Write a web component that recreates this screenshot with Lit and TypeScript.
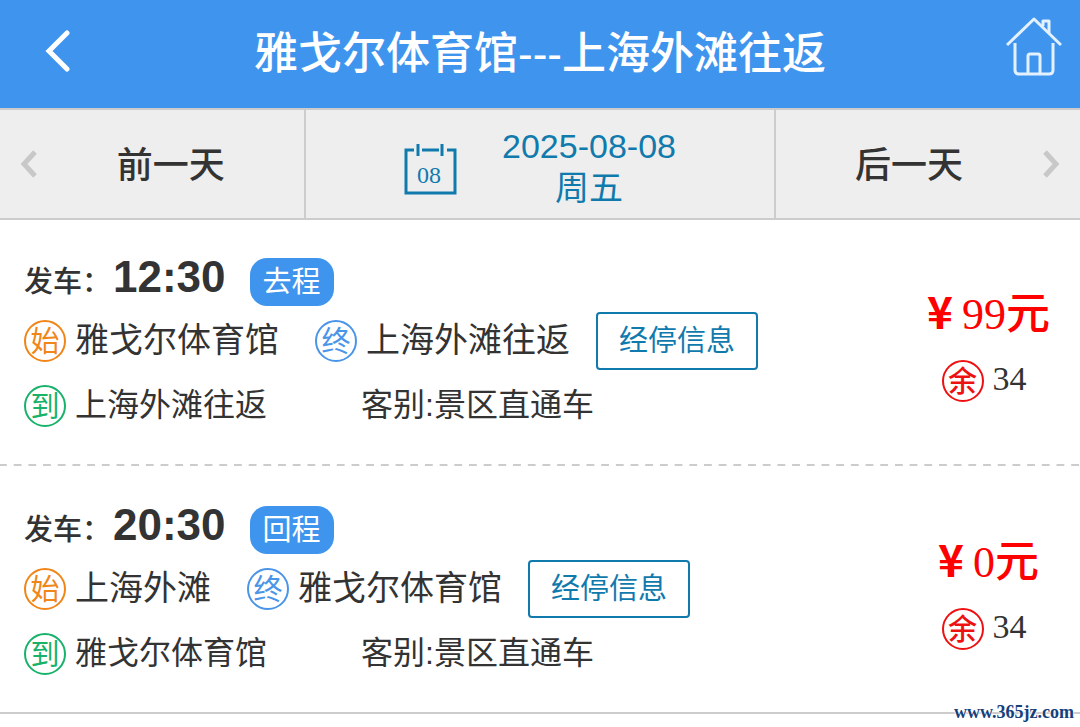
import { LitElement, html, css, svg } from "lit";
import { customElement, property } from "lit/decorators.js";

interface Trip {
  time: string;
  kind: string;
  from: string;
  to: string;
  arrive: string;
  service: string;
  price: number;
  left: number;
}

const trips: Trip[] = [
  { time: "12:30", kind: "去程", from: "雅戈尔体育馆", to: "上海外滩往返", arrive: "上海外滩往返", service: "景区直通车", price: 99, left: 34 },
  { time: "20:30", kind: "回程", from: "上海外滩", to: "雅戈尔体育馆", arrive: "雅戈尔体育馆", service: "景区直通车", price: 0, left: 34 },
];

const chevron = (points: string) => svg`<polyline points=${points} fill="none" stroke="currentColor"></polyline>`;

@customElement("trip-card")
export class TripCard extends LitElement {
  static styles = css`
    :host {
      display: flex;
      justify-content: space-between;
      color: #333;
    }
    .info {
      display: flex;
      flex-direction: column;
      align-items: flex-start;
      padding: 37px 0 37px 24px;
    }
    .row {
      display: flex;
      align-items: center;
    }
    .depart {
      height: 49px;
      margin-bottom: 6px;
      align-items: baseline;
      line-height: 48px;
    }
    .label {
      font-size: 29px;
      font-weight: 500;
    }
    .time {
      font-size: 44px;
      line-height: 40px;
      font-weight: 700;
      margin: 0 24px 0 2px;
    }
    .kind {
      padding: 0 13px;
      border-radius: 17px;
      background: #3f95ee;
      color: #fff;
      font-size: 29px;
      line-height: 48px;
    }
    .route {
      margin-bottom: 15px;
      font-size: 34px;
      line-height: 54px;
    }
    .mark {
      box-sizing: border-box;
      width: 42px;
      height: 42px;
      border: 2px solid currentColor;
      border-radius: 50%;
      font-size: 29px;
      line-height: 40px;
      text-align: center;
    }
    .start { color: #f08519; }
    .end { color: #4a95e8; }
    .reach { color: #18b26b; }
    .remain { color: #ee1111; font-weight: 500; }
    .place {
      margin: 0 36px 2px 9px;
    }
    .last {
      margin-right: 26px;
    }
    .stops {
      font: inherit;
      font-size: 29px;
      line-height: 54px;
      padding: 0 21px;
      border: 2px solid #117aad;
      border-radius: 4px;
      background: #fff;
      color: #117aad;
      white-space: nowrap;
    }
    .arrival {
      font-size: 32px;
      line-height: 38px;
    }
    .station {
      width: 286px;
      margin-left: 9px;
      padding-bottom: 3px;
    }
    .service {
      padding-bottom: 3px;
    }
    .fare {
      display: flex;
      flex-direction: column;
      align-items: center;
      width: 192px;
      padding-top: 67px;
      font-family: "Liberation Serif", "Noto Sans CJK SC", serif;
    }
    .price {
      display: flex;
      align-items: baseline;
      height: 56px;
      color: #ff0000;
      font-size: 44px;
      font-weight: 500;
      line-height: 56px;
      margin-bottom: 17px;
    }
    .yen {
      width: 44px;
      text-align: center;
      font-family: "Noto Sans CJK SC", sans-serif;
      font-weight: 700;
      line-height: 40px;
    }
    .count {
      margin: 0 0 4px 9px;
      font-size: 34px;
      line-height: 38px;
    }
  `;

  @property({ attribute: false }) trip!: Trip;

  render() {
    const t = this.trip;
    return html`
      <div class="info">
        <div class="row depart">
          <span class="label">发车：</span>
          <time class="time">${t.time}</time>
          <span class="kind">${t.kind}</span>
        </div>
        <div class="row route">
          <span class="mark start">始</span><span class="place">${t.from}</span>
          <span class="mark end">终</span><span class="place last">${t.to}</span>
          <button class="stops" type="button">经停信息</button>
        </div>
        <div class="row arrival">
          <span class="mark reach">到</span><span class="station">${t.arrive}</span>
          <span class="service">客别:${t.service}</span>
        </div>
      </div>
      <div class="fare">
        <div class="price"><span class="yen">¥</span><span>${t.price}元</span></div>
        <div class="row"><span class="mark remain">余</span><span class="count">${t.left}</span></div>
      </div>
    `;
  }
}

@customElement("app-root")
export class AppRoot extends LitElement {
  static styles = css`
    :host {
      display: block;
      position: relative;
      min-height: 100vh;
      background: #fff;
      font-family: "Liberation Sans", "Noto Sans CJK SC", sans-serif;
    }
    .bar {
      display: flex;
      align-items: center;
      justify-content: space-between;
      height: 108px;
      padding: 0 18px 0 44px;
      background: #3f95ee;
      color: #fff;
    }
    .bar a {
      display: flex;
      width: 56px;
      color: inherit;
    }
    .home {
      padding-bottom: 14px;
    }
    .back {
      padding-bottom: 6px;
    }
    .title {
      margin: 0;
      flex: 1;
      padding-right: 26px;
      text-align: center;
      font-size: 44px;
      line-height: 56px;
      font-weight: 500;
    }
    .days {
      display: grid;
      grid-template-columns: 9fr 14fr 9fr;
      height: 108px;
      border-top: 2px solid #ccc;
      border-bottom: 2px solid #ccc;
      background: #eee;
    }
    .day {
      display: flex;
      align-items: center;
      padding: 0 20px;
      border: 0;
      background: none;
      font: inherit;
      font-size: 36px;
      font-weight: 500;
      color: #333;
    }
    .prev { padding-right: 0; }
    .next { padding-left: 0; }
    .day svg {
      color: #c8c8c8;
    }
    .day span {
      flex: 1;
      padding-bottom: 4px;
    }
    .date {
      display: flex;
      align-items: center;
      justify-content: center;
      gap: 45px;
      border: solid #ccc;
      border-width: 0 2px;
      padding: 0;
      background: none;
      font: inherit;
      font-size: 34px;
      line-height: 42px;
      color: #117aad;
    }
    .calendar {
      margin-top: 10px;
      font-family: "Liberation Serif", serif;
      font-size: 24px;
    }
    .stack {
      display: flex;
      flex-direction: column;
      align-items: center;
      padding-top: 6px;
    }
    .list {
      display: grid;
      gap: 2px;
      margin: 0;
      padding: 0;
      list-style: none;
    }
    .item {
      padding-bottom: 2px;
      background: linear-gradient(90deg, #ccc 8px, transparent 8px) -1px 100% / calc(100% / 73.5) 2px repeat-x;
    }
    .item:last-child {
      background: linear-gradient(#ccc, #ccc) 0 100% / 100% 2px no-repeat;
    }
    .site {
      position: absolute;
      right: 6px;
      top: 700px;
      font-family: "Liberation Serif", serif;
      font-size: 18px;
      line-height: 24px;
      font-weight: 700;
      color: #16407c;
      text-decoration: none;
      text-shadow: 0 0 2px #fff, 0 0 2px #fff, 0 0 2px #fff;
    }
  `;

  render() {
    return html`
      <header class="bar">
        <a class="back" href="#back" aria-label="返回">
          <svg width="30" height="42" viewBox="0 0 30 42" stroke-width="5" stroke-linecap="round">${chevron("23,3 5,21 23,39")}</svg>
        </a>
        <h1 class="title">雅戈尔体育馆---上海外滩往返</h1>
        <a class="home" href="#home" aria-label="首页">
          <svg width="56" height="60" viewBox="0 0 56 60" fill="none" stroke="#e3f1ff" stroke-width="3" stroke-linejoin="round">
            <path d="M1 28 28 2 55 28" />
            <path d="M37 9V4H43V16" />
            <path d="M9 26V53Q9 57 13 57H43Q47 57 47 53V26" />
            <path d="M22 57V39Q22 37 24 37H32Q34 37 34 39V57" />
          </svg>
        </a>
      </header>
      <nav class="days">
        <button class="day prev" type="button">
          <svg width="18" height="28" viewBox="0 0 18 28" stroke-width="5">${chevron("15,2 4,14 15,26")}</svg>
          <span>前一天</span>
        </button>
        <button class="date" type="button">
          <svg class="calendar" width="53" height="52" viewBox="0 0 53 52" fill="none" stroke="currentColor" stroke-width="3">
            <path d="M10 7H2V50H51V7H43M18 7H35M14 1V13M38 1V13" />
            <text x="25" y="40" text-anchor="middle" fill="currentColor" stroke="none">08</text>
          </svg>
          <span class="stack"><span>2025-08-08</span><span>周五</span></span>
        </button>
        <button class="day next" type="button">
          <span>后一天</span>
          <svg width="18" height="28" viewBox="0 0 18 28" stroke-width="5">${chevron("3,2 14,14 3,26")}</svg>
        </button>
      </nav>
      <ul class="list">
        ${trips.map((t) => html`<li class="item"><trip-card .trip=${t}></trip-card></li>`)}
      </ul>
      <a class="site" href="#site">www.365jz.com</a>
    `;
  }
}
